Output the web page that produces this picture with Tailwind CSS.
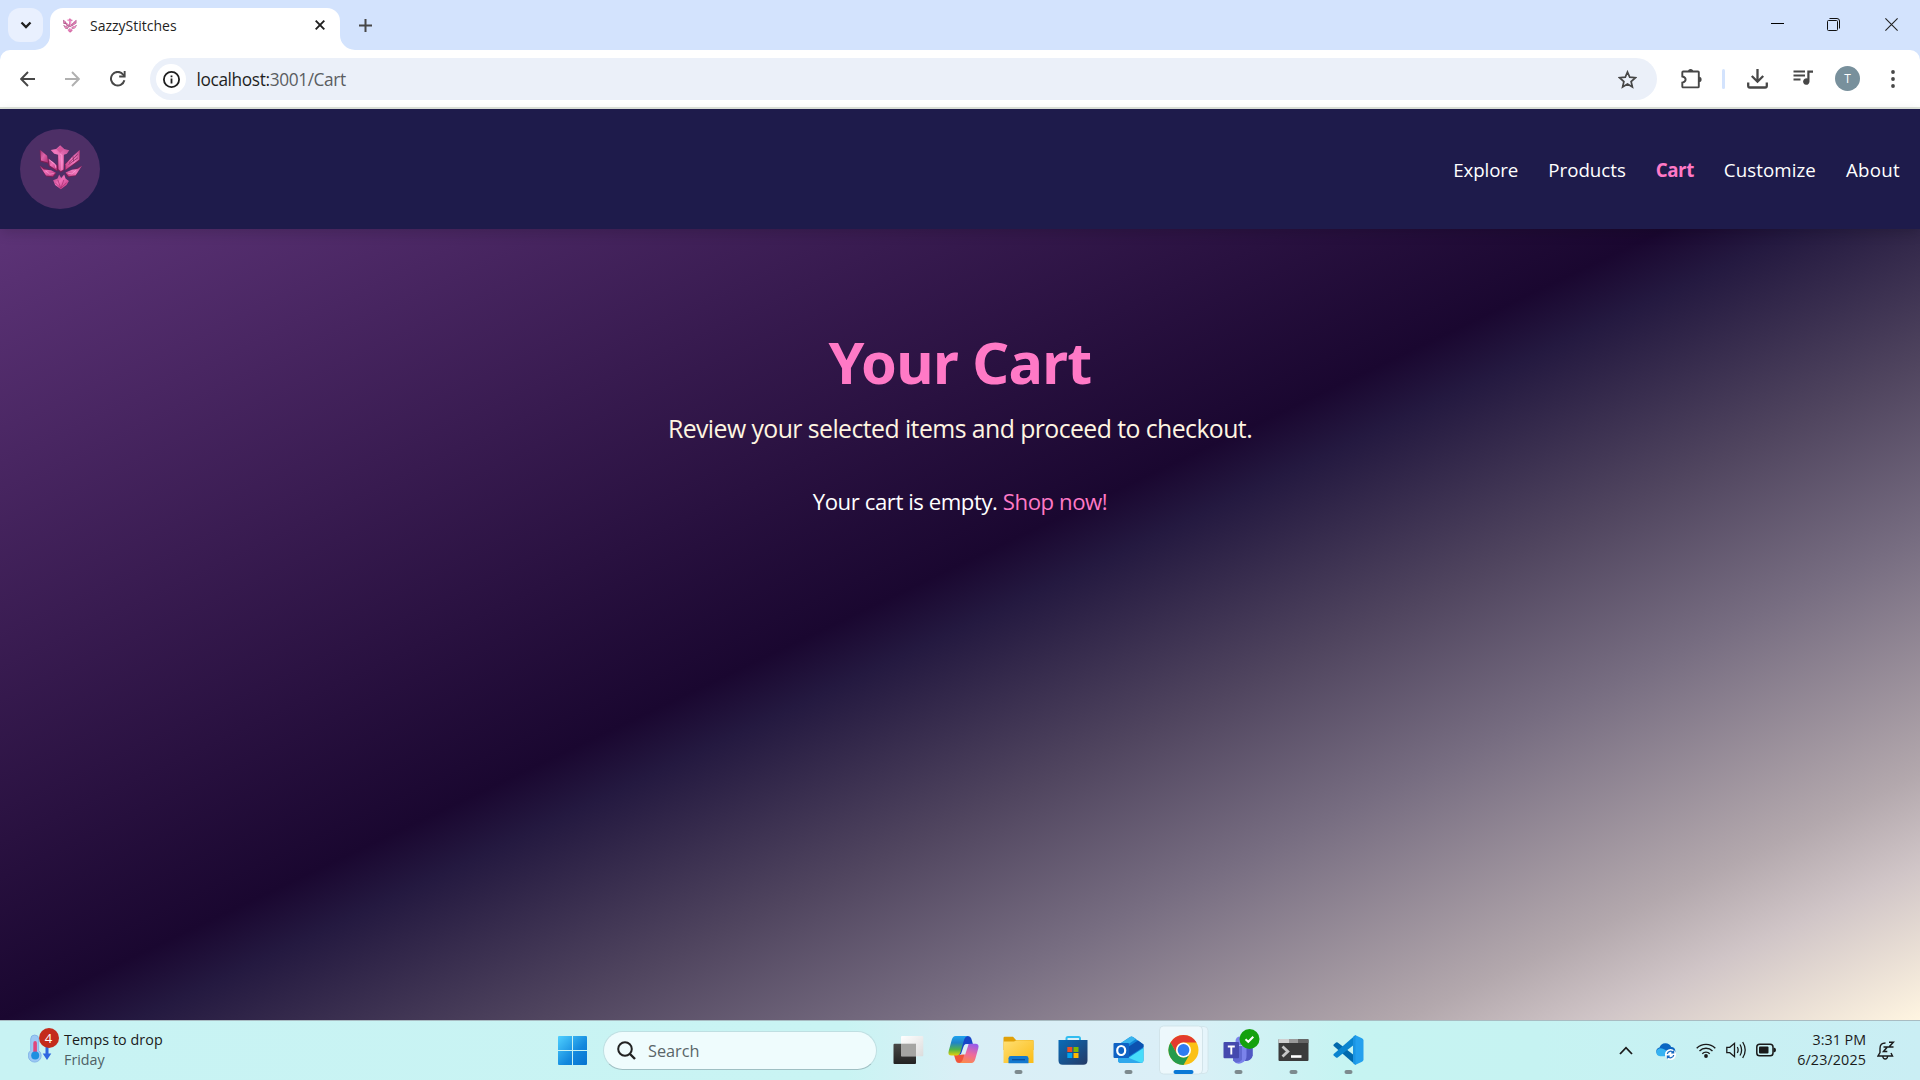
<!DOCTYPE html>
<html lang="en">
<head>
<meta charset="utf-8">
<title>SazzyStitches</title>
<script src="https://cdn.jsdelivr.net/npm/@tailwindcss/browser@4"></script>
</head>
<body class="w-[1920px] h-[1080px] overflow-hidden flex flex-col font-['Open_Sans','Noto_Sans',sans-serif] bg-[#d3e3fd]">

<svg class="absolute w-0 h-0">
  <defs>
    <linearGradient id="gemA" x1="0" y1="0" x2="1" y2="1"><stop offset="0" stop-color="#a83a7c"/><stop offset=".45" stop-color="#f070b8"/><stop offset="1" stop-color="#b52f78"/></linearGradient>
    <linearGradient id="gemB" x1="1" y1="0" x2="0" y2="1"><stop offset="0" stop-color="#b9478c"/><stop offset=".5" stop-color="#f27abf"/><stop offset="1" stop-color="#c03a80"/></linearGradient>
    <symbol id="crest" viewBox="118 436 128 134">
      <g fill="#7a1f55"><path d="M120 450l23 18 4 24-25-6zM142 474l31 24v18l-26-16zM240 452v30l-45 31v-21zM174 465h18v48l-10 5-9-8zM120 498l50 22-10 12-21-2zM246 498l-50 22 8 12 23-4z"/></g>
      <path d="M122 451l20 17 3 20-21-6z" fill="url(#gemA)" opacity=".85"/>
      <path d="M146 476l12 9 13 13v13l-21-14z" fill="url(#gemA)"/>
      <path d="M148 480l18 14 2 10" fill="none" stroke="#ffa0d8" stroke-width="2.5"/>
      <path d="M153 451l16-3 12-11 12 11 15 4-7 10-9 3-1 44-8 5-7-6-1-43-12-3z" fill="url(#gemB)"/>
      <path d="M170 449l11-9 11 9-11 11z" fill="#d5559c"/>
      <path d="M181 463l5 3v44" fill="none" stroke="#ff9ad5" stroke-width="2.5"/>
      <path d="M239 451l-1 28-41 31v-17l22-24z" fill="url(#gemB)"/>
      <path d="M233 464l-26 25M234 474l-28 20M219 469l2 16" stroke="#7a1f55" stroke-width="2" fill="none"/>
      <path d="M120 498l12 11 22 2 14 8-9 10-20-2-8-12z" fill="url(#gemA)"/>
      <path d="M246 498l-12 9-18 3-19 8 10 11 20-3 8-12z" fill="url(#gemB)"/>
      <path d="M138 513l12 10 12-2M228 511l-12 11-12-2" fill="none" stroke="#ffa0d8" stroke-width="2"/>
      <path d="M160 541l13-5 5-12 6 10 9-10 4 12 10 7-7 12-17 13-17-13z" fill="url(#gemA)"/>
      <path d="M174 540l9 25 9-25M166 548l17 17 17-17" fill="none" stroke="#a52d70" stroke-width="2"/>
    </symbol>
  </defs>
</svg>

<!-- Browser tab strip -->
<div class="h-[50px] shrink-0 flex items-start bg-[#d3e3fd]">
  <div class="mt-2 ml-2 w-[35px] h-[34px] rounded-xl bg-[#e9f0fe] flex items-center justify-center">
    <svg class="w-[12px] h-[8px]" viewBox="0 0 12 8"><path d="M1.500 1.500L6 6l4.500-4.500" fill="none" stroke="#1f1f1f" stroke-width="2.300"/></svg>
  </div>
  <svg class="mt-[35px] ml-[-8px] w-[15px] h-[15px]" viewBox="0 0 15 15"><path d="M15 0v15H0A15 15 0 0 0 15 0z" fill="#fff"/></svg>
  <div class="mt-2 w-[290px] h-[42px] rounded-t-[13px] bg-white flex items-center px-[13px] pb-[8px]">
    <svg class="w-[14px] h-[15px] opacity-80"><use href="#crest"/></svg>
    <span class="ml-[13px] w-[88px] text-[14px] leading-5 pt-px text-[#1f1f1f] whitespace-nowrap">SazzyStitches</span>
    <svg class="ml-auto mr-[2px] w-[10px] h-[10px]" viewBox="0 0 10 10"><path d="M.7.7l8.600 8.600M9.300.7L.7 9.300" stroke="#1f1f1f" stroke-width="1.900"/></svg>
  </div>
  <svg class="mt-[35px] w-[15px] h-[15px]" viewBox="0 0 15 15"><path d="M0 0v15h15A15 15 0 0 1 0 0z" fill="#fff"/></svg>
  <svg class="mt-[19px] ml-[4px] w-[13px] h-[13px]" viewBox="0 0 13 13"><path d="M6.500 0v13M0 6.500h13" stroke="#474747" stroke-width="2"/></svg>
  <svg class="mt-[23px] ml-auto w-[13px] h-[1px]" viewBox="0 0 13 1"><path d="M0 0h13v1H0z"/></svg>
  <svg class="mt-[18px] ml-[43px] w-[13px] h-[13px]" viewBox="0 0 13 13" fill="none" stroke="#111"><rect x=".5" y="2.500" width="10" height="10" rx="1"/><path d="M2.500.5h7.500a2.500 2.500 0 0 1 2.500 2.500v7.500"/></svg>
  <svg class="mt-[18px] ml-[45px] mr-[22px] w-[13px] h-[13px]" viewBox="0 0 13 13"><path d="M.4.400l12.200 12.200M12.600.400L.4 12.600" stroke="#222" stroke-width="1.100"/></svg>
</div>

<!-- Browser toolbar -->
<div class="h-[59px] shrink-0 bg-white rounded-t-[10px] border-b-2 border-[#dfe4dc] flex items-center">
  <svg class="ml-[20px] w-[15px] h-[16px]" viewBox="0 0 15 16"><path d="M15 8H1.500M8 1L1.200 8 8 15" fill="none" stroke="#474747" stroke-width="1.900"/></svg>
  <svg class="ml-[30px] w-[15px] h-[16px]" viewBox="0 0 15 16"><path d="M0 8h13.500M7 1l6.800 7L7 15" fill="none" stroke="#b0b0b0" stroke-width="1.900"/></svg>
  <svg class="ml-[30px] w-[16px] h-[16px]" viewBox="0 0 16 16"><path d="M14.400 9.300A6.800 6.800 0 1 1 13 3.300L14.500 5" fill="none" stroke="#474747" stroke-width="2"/><path d="M15.600 0v6.500H9.200V4.600h4.500V0z" fill="#474747"/></svg>
  <div class="ml-[24px] w-[1507px] h-[42px] rounded-full bg-[#ebf0f9] flex items-center mt-px">
    <div class="ml-[6px] size-[30px] rounded-full bg-white flex items-center justify-center">
      <svg class="size-[17px]" viewBox="0 0 17 17"><circle cx="8.500" cy="8.500" r="7.600" fill="none" stroke="#1f1f1f" stroke-width="1.800"/><path d="M7.600 7.500h1.800v5H7.600zM7.600 4.500h1.800v1.800H7.600z" fill="#1f1f1f"/></svg>
    </div>
    <p class="ml-[10.500px] text-[17.300px] leading-6 tracking-[-0.380px] text-[#5a5d61] pt-px"><span class="text-[#1f1f1f]">localhost:</span>3001/Cart</p>
    <svg class="ml-auto mr-[20px] w-[19px] h-[19px]" viewBox="0 0 19 19"><path d="M9.500 2l2.200 5.200 5.700.5-4.300 3.800 1.300 5.500-4.900-2.900L4.600 17l1.300-5.500L1.600 7.700l5.700-.5z" fill="none" stroke="#474747" stroke-width="1.700"/></svg>
  </div>
  <svg class="ml-[24px] w-[21px] h-[21px]" viewBox="0 0 21 21"><path d="M3 3.500h14q.8 0 .8.800V18.500q0 .9-.8.900H2.200q-.9 0-.9-.9V14.600C3.500 14.200 4.600 13 4.600 11.600S3.500 8.900 1.300 8.500V4.400q0-.9.9-.9z" fill="none" stroke="#474747" stroke-width="1.900"/><path d="M7 3.500a2.600 2.600 0 0 1 5.200 0zM18 8.800a2.600 2.600 0 0 1 0 5.200z" fill="#474747"/></svg>
  <div class="ml-[20px] w-[3px] h-[20px] rounded bg-[#d3e3fd]"></div>
  <svg class="ml-[22px] w-[21px] h-[21px]" viewBox="0 0 21 21" fill="none" stroke="#474747" stroke-width="2.300"><path d="M10.500 1v12M4.800 8l5.700 5.700L16.200 8M1.200 14.500v3.300q0 1.700 1.700 1.700h15.200q1.700 0 1.700-1.700v-3.300"/></svg>
  <svg class="ml-[25px] mb-[2px] w-[20px] h-[15px]" viewBox="0 0 20 15"><path d="M.5 1.500h11.500M.5 5.500h11.500M.5 9.500h7" stroke="#474747" stroke-width="2"/><path d="M14.300.5H20v2.200h-3.500v8.800a3.200 3.200 0 1 1-2.200-3z" fill="#474747"/></svg>
  <div class="ml-[22px] size-[25px] rounded-full bg-[#78909c] text-white text-[12px] leading-none flex items-center justify-center">T</div>
  <svg class="ml-[30.500px] w-[4px] h-[18px]" viewBox="0 0 4 18" fill="#474747"><circle cx="2" cy="2" r="1.900"/><circle cx="2" cy="9" r="1.900"/><circle cx="2" cy="16" r="1.900"/></svg>
</div>

<!-- Cart page -->
<div class="flex-1 flex flex-col bg-[linear-gradient(to_bottom_right,#673a82_0%,#1a0730_50%,#241940_53.5%,#50455f_64%,#776d81_73.5%,#b3a8ad_86.5%,#d0c5c7_91.5%,#fff5e1_100%)]">
  <header class="h-[120px] shrink-0 bg-[#1e1b4b] shadow-[0_4px_12px_rgba(0,0,0,0.15)] flex items-center justify-between px-5">
    <div class="size-20 rounded-full bg-[#4d2f66] flex items-center justify-center pb-[3px]">
      <svg class="w-[43px] h-[45px]"><use href="#crest"/></svg>
    </div>
    <nav class="flex gap-[30px] pt-[2px] text-[18.700px] leading-7 text-white">
      <a class="tracking-[-0.080px]">Explore</a>
      <a>Products</a>
      <a class="font-bold tracking-[-0.450px] text-[#ff79c6]">Cart</a>
      <a class="tracking-[0.080px]">Customize</a>
      <a class="tracking-[0.300px]">About</a>
    </nav>
  </header>
  <main class="flex flex-col items-center pt-[93px]">
    <h1 class="font-['Noto_Sans','Open_Sans',sans-serif] text-[57.500px] leading-[80px] tracking-[-0.700px] font-bold text-[#ff79c6]">Your Cart</h1>
    <p class="mt-2 text-[24.800px] leading-9 tracking-[-0.560px] text-[#fff5e1]">Review your selected items and proceed to checkout.</p>
    <p class="mt-10 text-[22.200px] leading-8 tracking-[-0.450px] text-white">Your cart is empty. <a class="text-[#ff79c6]">Shop now!</a></p>
  </main>
</div>

<!-- Taskbar -->
<div class="h-[60px] shrink-0 flex items-center shadow-[inset_0_1px_0_#a9bcc2] bg-[linear-gradient(90deg,#c8f3f3_0%,#c9f4f3_44%,#d9eff6_50%,#dbeff7_61%,#c6f4f2_70%,#c6f3f2_80%,#caeef4_100%)]">
  <div class="ml-[28px] w-[36px] h-[60px] relative">
    <svg class="w-[36px] h-[60px]" viewBox="0 0 36 60">
      <path d="M2.700 19a4 4 0 0 1 8 0v11.500a6.500 6.500 0 1 1-8 0z" fill="#9cc8f4" stroke="#7aaee6" stroke-width=".8"/>
      <path d="M5.300 23q0-2 1.800-2t1.800 2v11H5.300z" fill="#e0457b"/><circle cx="7.200" cy="35.500" r="4" fill="#1c8fe0"/>
      <path d="M17.500 26h3v7.500h2.800L19 40l-4.300-6.500h2.800z" fill="#2f67e0"/>
    </svg>
    <div class="absolute left-[10.500px] top-[8px] size-[20px] rounded-full bg-[#c42b1c] text-white text-[13px] leading-[20px] text-center">4</div>
  </div>
  <div class="text-[14.300px] leading-5 w-[100px]">
    <p class="text-[#1b1b1b] tracking-[0.080px] whitespace-nowrap">Temps to drop</p>
    <p class="text-[#4f6165]">Friday</p>
  </div>

  <svg class="ml-[394px] w-[29px] h-[29px]" viewBox="0 0 29 29"><defs><linearGradient id="win" x1="0" y1="0" x2="1" y2="1"><stop offset="0" stop-color="#4fd0ff"/><stop offset=".6" stop-color="#1288dd"/><stop offset="1" stop-color="#0573d0"/></linearGradient></defs><path d="M1 0h13v14H0V1q0-1 1-1zM15 0h13q1 0 1 1v13H15zM0 15h14v14H1q-1 0-1-1zM15 15h14v13q0 1-1 1H15z" fill="url(#win)"/></svg>
  <div class="ml-[16px] w-[274px] h-[39px] rounded-full bg-[#effcfd] border border-[#bfdfe2] border-b-[#9fbfc3] flex items-center">
    <svg class="ml-[13px] w-[19px] h-[19px]" viewBox="0 0 19 19"><circle cx="8" cy="8" r="6.800" fill="none" stroke="#222" stroke-width="2"/><path d="M13 13l5 5" stroke="#222" stroke-width="2.400"/></svg>
    <span class="ml-[12px] pt-px text-[16.300px] leading-6 text-[#5a6568]">Search</span>
  </div>

  <div class="ml-[3.500px] flex">
    <!-- Task view -->
    <svg class="w-[55px] h-[60px]" viewBox="0 0 55 60"><defs><linearGradient id="tv" x1="0" y1="0" x2="0" y2="1"><stop offset="0" stop-color="#4a4a48"/><stop offset="1" stop-color="#222"/></linearGradient><linearGradient id="tw" x1="0" y1="0" x2="1" y2="1"><stop offset="0" stop-color="#fff"/><stop offset="1" stop-color="#dcdcdc"/></linearGradient></defs><rect x="12.500" y="23.700" width="22.500" height="20.300" rx="1" fill="url(#tv)"/><rect x="20" y="16" width="22.300" height="20.300" rx="1" fill="url(#tw)"/><path d="M20 23.700h15v12.600H20z" fill="#a5a5a3"/></svg>
    <!-- Copilot -->
    <svg class="w-[55px] h-[60px]" viewBox="0 0 55 60"><defs><linearGradient id="ca" x1="0" y1="0" x2="0" y2="1"><stop offset="0" stop-color="#1fa3ef"/><stop offset=".35" stop-color="#1f84c8"/><stop offset=".7" stop-color="#52b548"/><stop offset="1" stop-color="#e3d10a"/></linearGradient><linearGradient id="cb" x1=".6" y1="0" x2=".3" y2="1"><stop offset="0" stop-color="#9a5ce8"/><stop offset=".5" stop-color="#ee6a9c"/><stop offset="1" stop-color="#fb8a4c"/></linearGradient></defs>
      <path d="M21 16h11q2.500 0 3.300 2.500l1.600 5.500h-6q-2.700 0-3.500 3L25 34l-4 2z" fill="#1646c8"/>
      <path d="M34 43H23q-2.500 0-3.300-2.500L18 35h6q2.700 0 3.500-3L30 25l4 0z" fill="#f0553a"/>
      <path d="M19.500 16H32q-3 .5-4 4l-3.500 12q-1 3.500-4 3.500h-5q-4 0-2.800-4.500l3-11q1.200-4 3.800-4z" fill="url(#ca)"/>
      <path d="M35.500 43H23q3-.5 4-4l3.500-12q1-3.300 4-3.300h5q4 0 2.800 4.500l-3 10.800q-1.200 4-3.800 4z" fill="url(#cb)"/>
      <path d="M29 24.500h3.500l-3.300 10H25.600z" fill="#d9eff6"/></svg>
    <!-- File Explorer -->
    <svg class="w-[55px] h-[60px]" viewBox="0 0 55 60"><defs><linearGradient id="fo" x1="0" y1="0" x2="1" y2="1"><stop offset="0" stop-color="#ffdf73"/><stop offset="1" stop-color="#fbbc16"/></linearGradient></defs><path d="M12.500 18q0-1.200 1.200-1.200h8.300l3 3.200h16.500q1 0 1 1V30h-30z" fill="#e0a008"/><path d="M12.500 21.500H23l2.500-1.200h17V43h-30z" fill="url(#fo)"/><path d="M17.500 43.300v-5q0-2.300 2.300-2.300h15.400q2.300 0 2.300 2.300v5z" fill="#1479cf"/><path d="M21 39.700h13" stroke="#0b4f9a" stroke-width="1.300"/><rect x="23.500" y="50" width="8" height="4" rx="2" fill="#7d8a8e"/></svg>
    <!-- Store -->
    <svg class="w-[55px] h-[60px]" viewBox="0 0 55 60"><defs><linearGradient id="st" x1="0" y1="0" x2="1" y2="1"><stop offset="0" stop-color="#0a6cb8"/><stop offset="1" stop-color="#243a66"/></linearGradient></defs><path d="M20.500 22v-3.500q0-1.500 1.500-1.500h10.500q1.500 0 1.500 1.500V22" fill="none" stroke="#32bdf0" stroke-width="2"/><path d="M12.500 20h29v20.500q0 4.200-4.200 4.200H16.700q-4.200 0-4.200-4.200z" fill="url(#st)"/><path d="M21.300 27h5v5h-5z" fill="#f25022"/><path d="M27.500 27h5v5h-5z" fill="#7fba00"/><path d="M21.300 33h5v5h-5z" fill="#00a4ef"/><path d="M27.500 33h5v5h-5z" fill="#ffb900"/></svg>
    <!-- Outlook -->
    <svg class="w-[55px] h-[60px]" viewBox="0 0 55 60"><path d="M17 25l12-8q1.500-1 3 0l10.500 7.500V40q0 3-3 3H20q-3 0-3-3z" fill="#1286d8"/><path d="M17 25l12-8q1.500-1 3 0l3 2-15 10z" fill="#38b4ee"/><path d="M27 27l10-6.500 5.500 4V27L27 37z" fill="#0c52b0"/><path d="M28 37.500L42.500 28v12q0 3-3 3H20z" fill="#47dcfa"/><path d="M17 36l11 2 12.500 5H20q-3 0-3-3z" fill="#2fa8ec"/><rect x="12.500" y="23" width="15.500" height="15" rx="1" fill="#0f62c4"/><ellipse cx="20.200" cy="30.500" rx="4" ry="4.500" fill="none" stroke="#fff" stroke-width="2.200"/><rect x="23.500" y="50" width="8" height="4" rx="2" fill="#7d8a8e"/></svg>
    <!-- Chrome -->
    <svg class="w-[55px] h-[60px]" viewBox="0 0 55 60"><rect x="5" y="6.500" width="47" height="47" rx="4" fill="#e6f5fb" stroke="#cfe2e8" stroke-width=".8"/><rect x="3.500" y="6" width="43" height="48" rx="4" fill="#edf8fc" stroke="#cde0e6" stroke-width=".8"/>
      <g transform="translate(27.500 30)"><circle r="15" fill="#fbc116"/><path d="M0-15A15 15 0 0 1 13-7.500H0A7.500 7.500 0 0 0-6.500 3.750L-13-7.500A15 15 0 0 1 0-15z" fill="#e33b2e"/><path d="M-13-7.500L-6.500 3.750A7.500 7.500 0 0 0 6.500 3.750L0 15A15 15 0 0 1-13-7.500z" fill="#259b4b"/><circle r="7.500" fill="#fff"/><circle r="5.900" fill="#2f7cf0"/></g><rect x="17.500" y="50" width="20" height="4" rx="2" fill="#0a78d6"/></svg>
    <!-- Teams -->
    <svg class="w-[55px] h-[60px]" viewBox="0 0 55 60"><path d="M34 27h7.800v8.500a7 7 0 0 1-7.800 5.500z" fill="#5158c4"/><circle cx="29" cy="21" r="4.500" fill="#7b83eb"/><path d="M22 26h13.500v9.500a7.500 7.500 0 0 1-13.500 5z" fill="#7b83eb"/><path d="M22 26h9v14q-3 3-6 2.500l-3-2z" fill="#6169d2"/><rect x="12.500" y="22" width="15.500" height="16.300" rx="1" fill="#4549ae"/><path d="M16.800 26.500h7M20.300 26.500v8" stroke="#fff" stroke-width="1.900"/><circle cx="38.500" cy="19" r="10" fill="#14a10e"/><path d="M34.500 19.200l2.800 2.600 5-5" fill="none" stroke="#fff" stroke-width="2"/><rect x="23.500" y="50" width="8" height="4" rx="2" fill="#7d8a8e"/></svg>
    <!-- Terminal -->
    <svg class="w-[55px] h-[60px]" viewBox="0 0 55 60"><rect x="12.500" y="19" width="30" height="22" rx="1" fill="#3b3b3b"/><path d="M13.500 19h9.500v4H12.500v-3q0-1 1-1z" fill="#cfcfcf"/><path d="M23 19h9.500v4H23z" fill="#9a9a9a"/><path d="M32.500 19h9q1 0 1 1v3h-10z" fill="#666"/><path d="M16.500 26.500l5.300 5-5.300 5" fill="none" stroke="#c6c6c6" stroke-width="2.800"/><path d="M25 36.500h10.500" stroke="#fff" stroke-width="2.600"/><rect x="23.500" y="50" width="8" height="4" rx="2" fill="#7d8a8e"/></svg>
    <!-- VS Code -->
    <svg class="w-[55px] h-[60px]" viewBox="0 0 55 60"><path d="M12.700 24.500l2.300-2q.8-.6 1.700 0L34 36v8.500L12.700 26q-.7-.8 0-1.500z" fill="#0069ad"/><path d="M12.700 35.500l2.300 2q.8.600 1.700 0L34 24v-8.500L12.700 34q-.7.800 0 1.500z" fill="#0a84cf"/><path d="M34 15l7 3.200q1.500.7 1.500 2.300v19q0 1.600-1.500 2.300L34 45z" fill="#24a0ee"/><path d="M32 17l2.500-2v30L32 43z" fill="#1a94e2"/><rect x="23.500" y="50" width="8" height="4" rx="2" fill="#7d8a8e"/></svg>
  </div>

  <!-- System tray -->
  <svg class="ml-auto w-[14px] h-[9px]" viewBox="0 0 14 9"><path d="M1 8l6-6.300L13 8" fill="none" stroke="#1a1a1a" stroke-width="1.800"/></svg>
  <svg class="ml-[23px] mt-[3px] w-[20px] h-[17px]" viewBox="0 0 20 17"><path d="M4 12.500a4 4 0 0 1-.5-7.900A6.300 6.300 0 0 1 15.200 4 4.300 4.300 0 0 1 16 12.500z" fill="#0b66c2"/><path d="M4 13.200A4 4 0 0 1 3 5.500q3-1 6 1.300l5 3.500v2.900z" fill="#35b2f2"/><circle cx="14.500" cy="11.500" r="5.500" fill="#fff"/><path d="M11.300 11a3.300 3.300 0 0 1 6-1.300M17.700 12a3.300 3.300 0 0 1-6 1.300M17.600 7.500v2.400h-2.400M11.400 15.500v-2.400h2.400" fill="none" stroke="#1668c0" stroke-width="1.300"/></svg>
  <svg class="ml-[20px] w-[20px] h-[16px]" viewBox="0 0 20 16"><g fill="none" stroke="#1a1a1a" stroke-width="1.400"><path d="M.7 6.200a13.200 13.200 0 0 1 18.600 0M3.500 9a9.200 9.200 0 0 1 13 0M6.300 11.700a5.200 5.200 0 0 1 7.400 0"/></g><circle cx="10" cy="14" r="1.900" fill="#1a1a1a"/></svg>
  <svg class="ml-[10px] w-[20px] h-[18px]" viewBox="0 0 20 18"><g fill="none" stroke="#1a1a1a" stroke-width="1.300"><path d="M.8 6.300h3l4.700-4v13.400l-4.700-4h-3z"/><path d="M11.300 6q1.700 3 0 6M14 3.500q3.200 5.500 0 11M16.700 1q5 8 0 16"/></g></svg>
  <svg class="ml-[10px] w-[20px] h-[14px]" viewBox="0 0 20 14"><rect x=".8" y="1.300" width="16.200" height="11.500" rx="2.800" fill="none" stroke="#1a1a1a" stroke-width="1.500"/><rect x="3" y="3.500" width="9.500" height="7" rx="1" fill="#1a1a1a"/><path d="M17.500 4.800h1q1.500.3 1.500 2.200t-1.500 2.200h-1z" fill="#1a1a1a"/></svg>
  <div class="w-[90px] text-right text-[14.300px] leading-5 text-[#1b1b1b]">
    <p>3:31 PM</p>
    <p class="tracking-[0.120px]">6/23/2025</p>
  </div>
  <svg class="ml-[11px] mr-[25px] w-[18px] h-[19px]" viewBox="0 0 18 19" fill="none" stroke="#1a1a1a" stroke-width="1.400"><path d="M8.500 2Q3 2 3 7.500v4L1 15h14.500l-1.500-3M5.800 15.500q.3 2.500 2.400 2.500t2.400-2.500"/><path d="M6.500 6h3.800l-3.800 4.500h3.800" stroke-width="1.500"/><path d="M12 1.200h4.300L12 6h4.500" stroke-width="1.500"/></svg>
</div>
</body>
</html>
